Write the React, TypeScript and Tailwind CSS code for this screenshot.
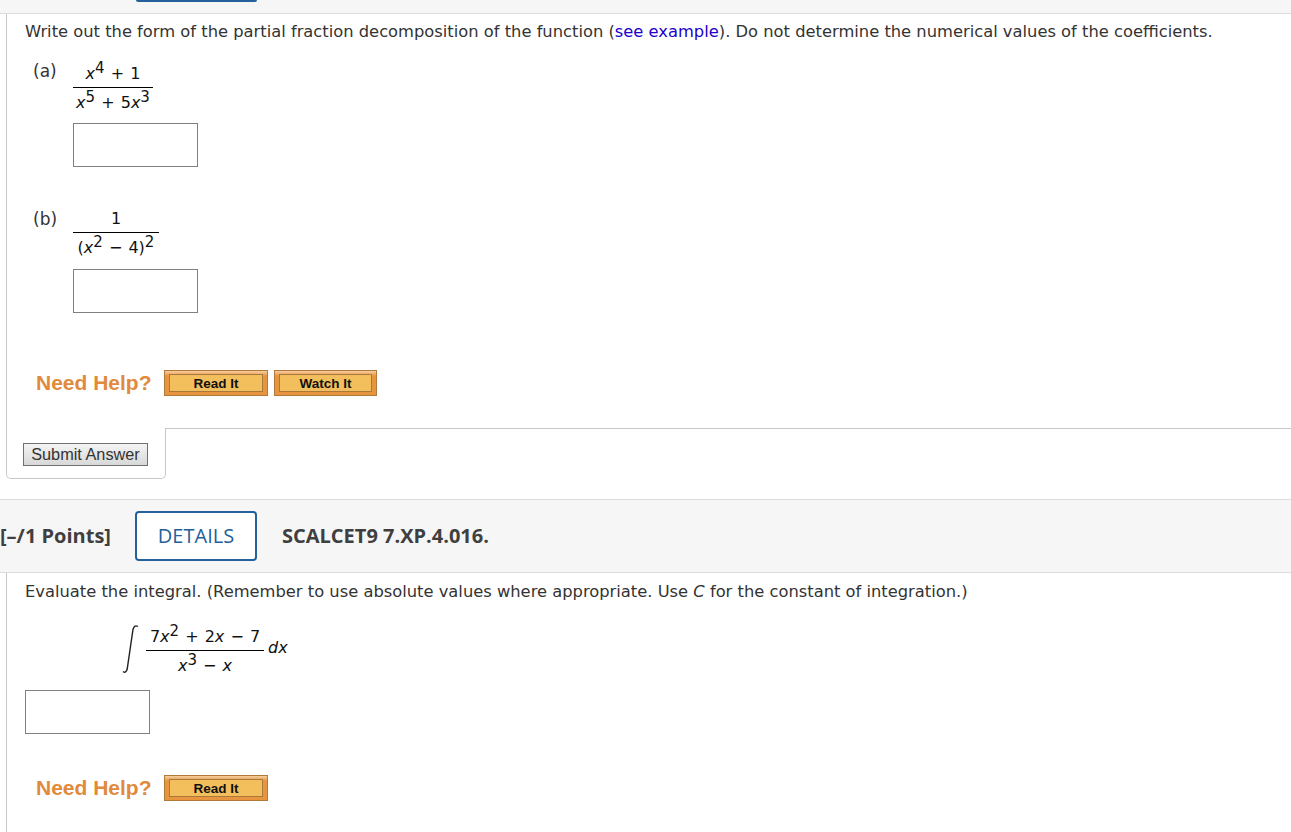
const verdana = "font-['DejaVu_Sans',sans-serif]";

function Sup({ children }: { children: React.ReactNode }) {
  return <span className="relative top-[-6px] text-[15px] leading-none">{children}</span>;
}

function Fraction({ top, bottom, className, topClass }: { top: React.ReactNode; bottom: React.ReactNode; className: string; topClass: string }) {
  return (
    <div className={`flex flex-col items-center text-[16px] leading-[20px] [word-spacing:1px] text-[#111] ${className}`}>
      <div className={`w-full text-center whitespace-nowrap border-b border-black ${topClass}`}>{top}</div>
      <div className="pt-[5px] w-full text-center whitespace-nowrap">{bottom}</div>
    </div>
  );
}

function AnswerBox() {
  return <div className="w-[125px] h-[44px] border border-[#808080] bg-white" />;
}

function HelpButton({ label, width }: { label: string; width: string }) {
  return (
    <div className={`h-[26px] ${width} border border-[#b07a3a] bg-gradient-to-b from-[#f6cfa0] via-[#e8953f] via-20% to-[#e8953f] px-[4px] py-[3px]`}>
      <div className="h-full pt-[3px] flex items-center justify-center border border-[#a8793a] bg-[#f3bf5c] text-[13.5px] font-bold text-[#111] font-['Liberation_Sans',sans-serif]">
        {label}
      </div>
    </div>
  );
}

function NeedHelp({ watch }: { watch?: boolean }) {
  return (
    <div className="flex items-center h-[27px] pl-[11px]">
      <span className="w-[128px] text-[21px] font-bold text-[#e28a3c] font-['Liberation_Sans',sans-serif]">Need Help?</span>
      <div className="flex gap-[6px]">
        <HelpButton label="Read It" width="w-[104px]" />
        {watch && <HelpButton label="Watch It" width="w-[103px]" />}
      </div>
    </div>
  );
}

export default function App() {
  return (
    <div className={`w-[1291px] h-[832px] overflow-hidden bg-white text-[16.32px] text-[#333] ${verdana}`}>
      <div className="h-[14px] bg-[#f6f6f6] border-b border-[#dcdcdc] pl-[136px]">
        <div className="w-[121px] h-[2px] bg-[#24609a] rounded-b-[3px]" />
      </div>

      <div className="ml-[6px] border-l border-[#c8c8c8] h-[414px] pl-[18px]">
        <p className="pt-[8px] leading-[20px] whitespace-nowrap">
          Write out the form of the partial fraction decomposition of the function (
          <span className="text-[#2200cc]">see example</span>). Do not determine the numerical values of the coefficients.
        </p>

        <div className="flex mt-[19px] pl-[8px]">
          <span className="w-[40px] leading-[20px] text-[17px]">(a)</span>
          <div className="flex flex-col">
            <Fraction
              className="w-[80px] -mt-[2px]"
              topClass="h-[29px] pt-[5px]"
              top={<><i>x</i><Sup>4</Sup> + 1</>}
              bottom={<><i>x</i><Sup>5</Sup> + 5<i>x</i><Sup>3</Sup></>}
            />
            <div className="mt-[10px]"><AnswerBox /></div>
          </div>
        </div>

        <div className="flex mt-[42px] pl-[8px]">
          <span className="w-[40px] leading-[20px] text-[17px]">(b)</span>
          <div className="flex flex-col">
            <Fraction
              className="w-[86px] -mt-[5px]"
              topClass="h-[29px] pt-[5px]"
              top="1"
              bottom={<>(<i>x</i><Sup>2</Sup> − 4)<Sup>2</Sup></>}
            />
            <div className="mt-[11px]"><AnswerBox /></div>
          </div>
        </div>

        <div className="mt-[56px] -ml-[1px] pl-[1px]">
          <NeedHelp watch />
        </div>
      </div>

      <div className="flex h-[51px]">
        <div className="ml-[6px] w-[160px] h-[51px] border border-t-0 border-[#c8c8c8] rounded-b-[5px] pl-[16px] pt-[15px]">
          <div className="w-[125px] h-[23px] flex items-center justify-center border border-[#707070] bg-gradient-to-b from-[#f4f4f4] to-[#d8d8d8] text-[16.3px] text-[#333] font-['Liberation_Sans',sans-serif]">
            Submit Answer
          </div>
        </div>
        <div className="flex-1 border-t border-[#c8c8c8]" />
      </div>

      <div className="mt-[20px] h-[74px] bg-[#f6f6f6] border-y border-[#dcdcdc] flex items-center font-['Open_Sans',sans-serif] text-[20px] font-bold text-[#3f3f3f]">
        <span className="w-[135px] whitespace-nowrap">[–/1 Points]</span>
        <div className="w-[122px] h-[50px] flex items-center justify-center border-2 border-[#24609a] rounded-[4px] bg-white text-[#24609a] font-medium text-[20px]">
          DETAILS
        </div>
        <span className="ml-[25px]">SCALCET9 7.XP.4.016.</span>
      </div>

      <div className="ml-[6px] border-l border-[#c8c8c8] h-[260px] pl-[18px]">
        <p className="pt-[9px] leading-[20px] whitespace-nowrap">
          Evaluate the integral. (Remember to use absolute values where appropriate. Use <i>C</i> for the constant of integration.)
        </p>

        <div className="flex items-center h-[60px] mt-[17px] pl-[97px] text-[#111]">
          <svg width="24" height="50" viewBox="0 0 24 50" className="shrink-0">
            <path d="M1 47.500c2 1.500 3.500 .5 4.200-2.500L11 5.500c.7-3 2.300-4.500 5-3" fill="none" stroke="#222" strokeWidth="1.400" />
          </svg>
          <Fraction
            className="w-[118px] shrink-0"
            topClass="h-[29px] pt-[5px]"
            top={<>7<i>x</i><Sup>2</Sup> + 2<i>x</i> − 7</>}
            bottom={<><i>x</i><Sup>3</Sup> − <i>x</i></>}
          />
          <span className="ml-[4px] -mt-[2px] text-[16px] italic">dx</span>
        </div>

        <div className="mt-[11px]"><AnswerBox /></div>

        <div className="mt-[40px]">
          <NeedHelp />
        </div>
      </div>
    </div>
  );
}
